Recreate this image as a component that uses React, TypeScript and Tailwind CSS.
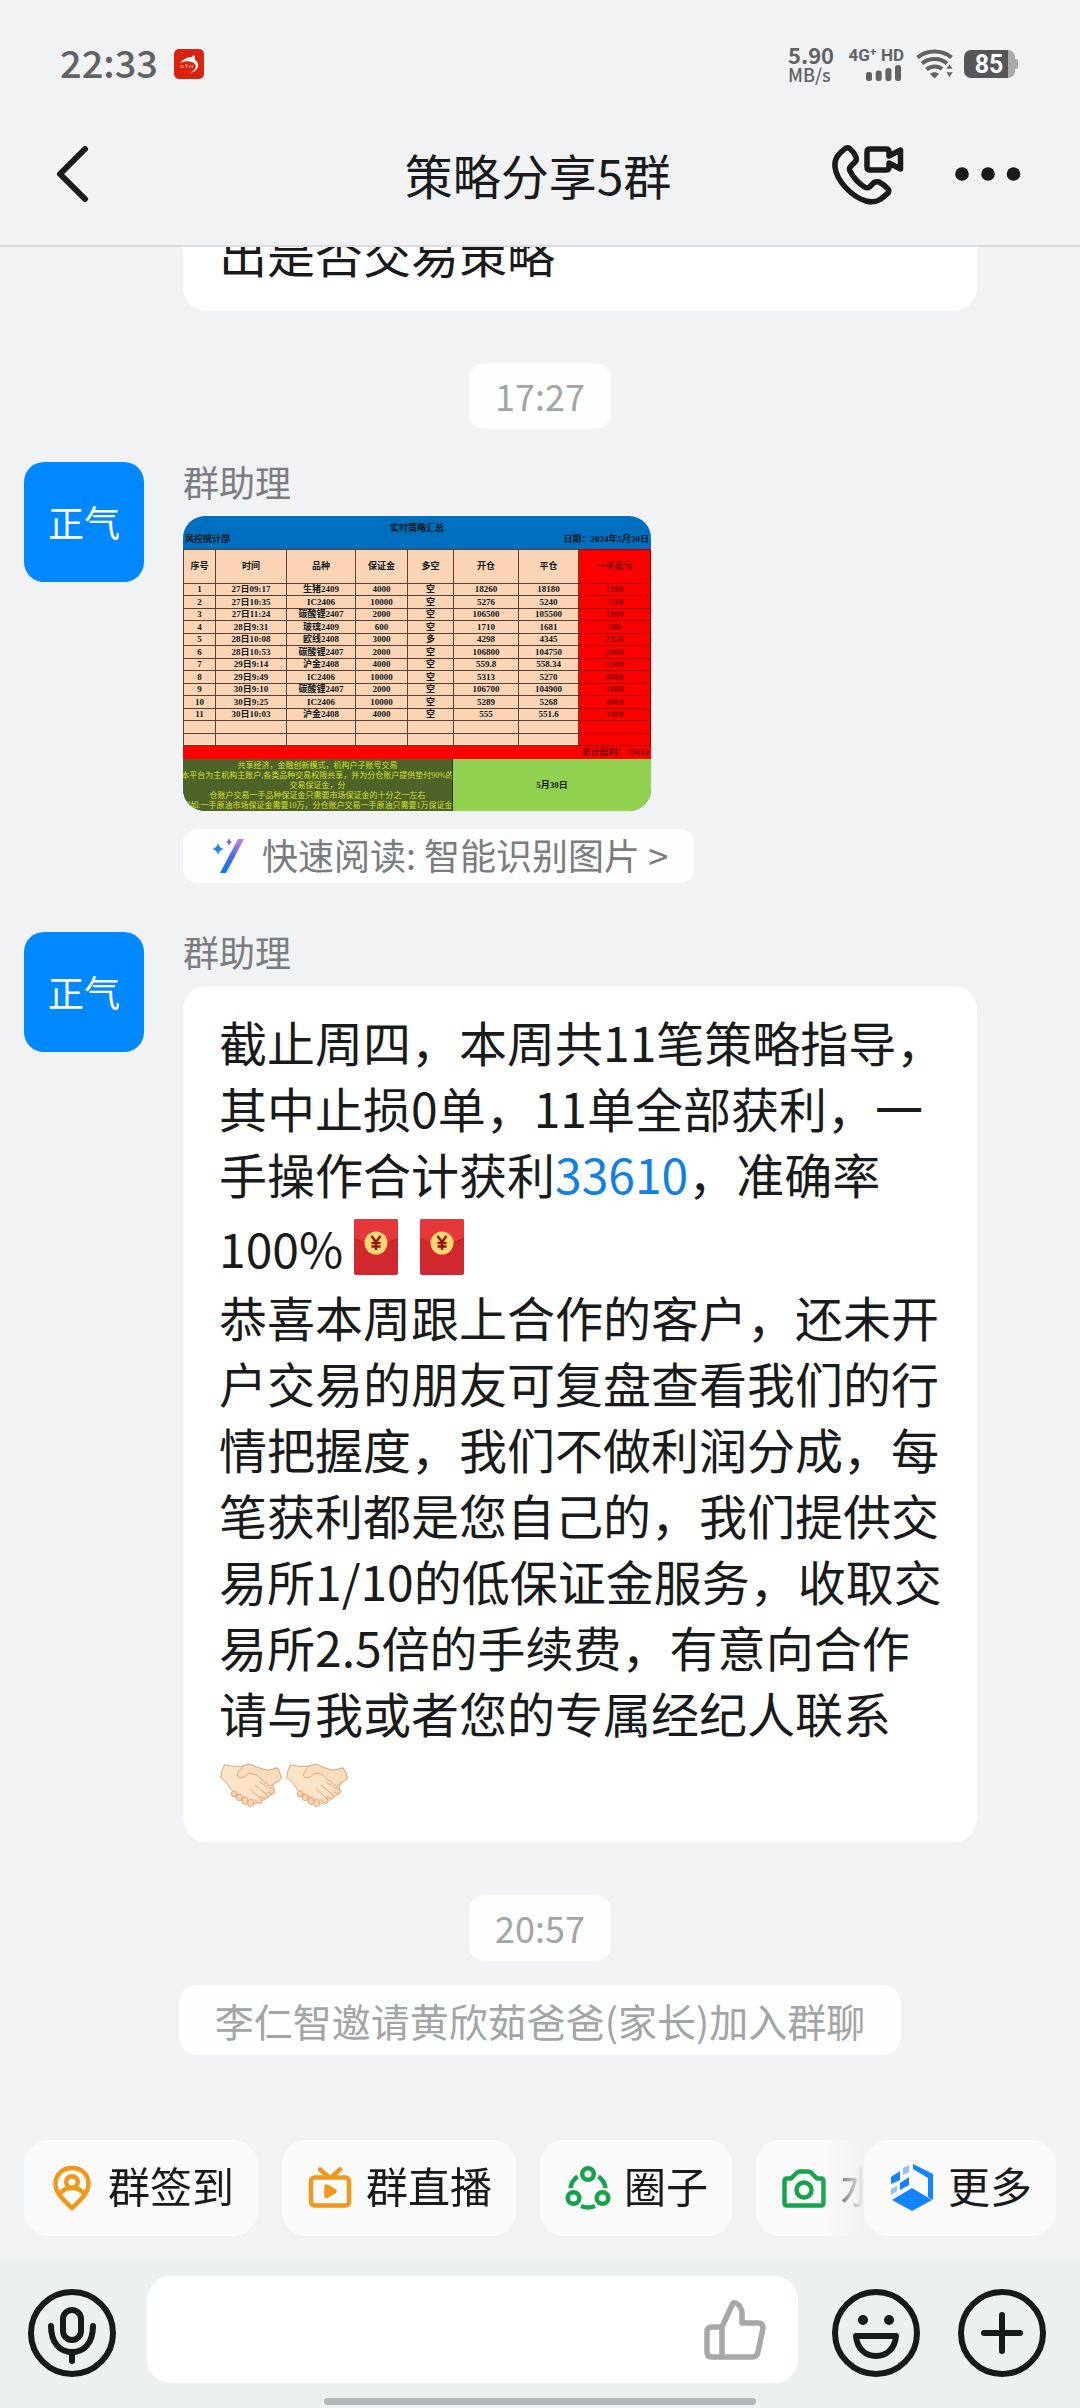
import { ReactNode } from "react";

const strategyRows = [
  ["1", "27日09:17", "生猪2409", "4000", "空", "18260", "18180", "1280"],
  ["2", "27日10:35", "IC2406", "10000", "空", "5276", "5240", "7200"],
  ["3", "27日11:24", "碳酸锂2407", "2000", "空", "106500", "105500", "1000"],
  ["4", "28日9:31", "玻璃2409", "600", "空", "1710", "1681", "580"],
  ["5", "28日10:08", "欧线2408", "3000", "多", "4298", "4345", "2350"],
  ["6", "28日10:53", "碳酸锂2407", "2000", "空", "106800", "104750", "2000"],
  ["7", "29日9:14", "沪金2408", "4000", "空", "559.8", "558.34", "1500"],
  ["8", "29日9:49", "IC2406", "10000", "空", "5313", "5270", "8600"],
  ["9", "30日9:10", "碳酸锂2407", "2000", "空", "106700", "104900", "1800"],
  ["10", "30日9:25", "IC2406", "10000", "空", "5289", "5268", "4000"],
  ["11", "30日10:03", "沪金2408", "4000", "空", "555", "551.6", "3400"],
  ["", "", "", "", "", "", "", ""],
  ["", "", "", "", "", "", "", ""],
];

const strategyColumns = [
  { label: "序号", width: "w-[32px]" },
  { label: "时间", width: "w-[71px]" },
  { label: "品种", width: "w-[69px]" },
  { label: "保证金", width: "w-[52px]" },
  { label: "多空", width: "w-[46px]" },
  { label: "开仓", width: "w-[65px]" },
  { label: "平仓", width: "w-[60px]" },
  { label: "一手盈亏", width: "w-[72px]" },
];

const StatusBar = () => (
  <div className="flex h-[100px] items-center justify-between pt-[28px] pl-[60px] pr-[62px] text-[#606264]">
    <div className="flex items-center gap-4">
      <span className="pb-1 text-[38px] leading-none font-medium">22:33</span>
      <svg className="size-[30px]" viewBox="0 0 30 30">
        <rect width="30" height="30" rx="5" fill="#d9230f" />
        <path
          d="M6 14C10 9 15 8 18 8L19 6.5L21 6.5L20.5 10C24 13 26 17 22 21C20 23 18 23.500 16.500 23.500C21 21.500 23 18 21 15C18 11.500 11 11.500 6 14Z"
          fill="#fff"
        />
        <path
          d="M7 16V19M9 16V19M11 16H14M12.500 16V19M16 16V19M18.500 16V19M16 17.500H18.500"
          stroke="#f6b5ac"
          strokeWidth="0.8"
        />
      </svg>
    </div>
    <div className="flex items-center">
      <div className="flex w-[58px] flex-col">
        <span className="text-[22px] leading-[20px] font-bold">5.90</span>
        <span className="text-[18px] leading-[20px] font-medium">MB/s</span>
      </div>
      <div className="flex w-[58px] flex-col items-end gap-[2px] font-[Roboto]">
        <span className="text-[17px] leading-[16px] font-bold whitespace-nowrap">
          4G⁺ HD
        </span>
        <svg className="mr-[3px] h-[16px] w-[35px]" viewBox="0 0 35 16">
          <g fill="currentColor">
            <rect x="0" y="7" width="6" height="9" rx="2.500" />
            <rect x="9.700" y="5.500" width="6" height="10.500" rx="2.500" />
            <rect x="19.400" y="3" width="6" height="13" rx="2.500" />
            <rect x="29" y="0" width="6" height="16" rx="2.500" />
          </g>
        </svg>
      </div>
      <svg className="ml-3 h-[30px] w-[38px]" viewBox="0 0 38 30">
        <g fill="none" stroke="currentColor" strokeWidth="4">
          <path d="M1.500 8.500C11 0.500 26 0.500 35.500 8.500" />
          <path d="M6 14.500C13 8.500 24 8.500 31 14.500" />
          <path d="M10.500 20.500C15 16.500 22 16.500 26 20" />
        </g>
        <path
          d="M14 25C16.500 22.500 20.500 22.500 23 25L18.500 29.500Z"
          fill="currentColor"
        />
        <path
          d="M33.500 15L37 20H30ZM30 23H37L33.500 28.500Z"
          fill="currentColor"
          stroke="#f1f3f5"
          strokeWidth="0.500"
        />
      </svg>
      <div className="ml-[10px] flex items-center">
        <div className="flex h-[28px] w-[44px] items-center justify-center rounded-l-[7px] bg-[#545658] pl-[6px] font-[Roboto] text-[25px] leading-none font-bold text-white">
          85
        </div>
        <div className="h-[28px] w-[7px] rounded-r-[7px] bg-[#a6a8aa]" />
        <div className="h-[10px] w-[3px] rounded-r-[2px] bg-[#a6a8aa]" />
      </div>
    </div>
  </div>
);

const ChatHeader = () => (
  <header className="grid h-[147px] grid-cols-[1fr_auto_1fr] items-center border-b-2 border-[#d9dbdd] pt-[2px] pr-[58px] pl-[54px] text-[#181a1b]">
    <button type="button" aria-label="返回" className="justify-self-start">
      <svg
        className="h-[60px] w-[36px]"
        viewBox="0 0 36 60"
        fill="none"
        stroke="currentColor"
        strokeWidth="6"
        strokeLinecap="round"
        strokeLinejoin="round"
      >
        <path d="M31 5L6 30L31 55" />
      </svg>
    </button>
    <h1 className="text-[48px] leading-[56px]">策略分享5群</h1>
    <div className="flex items-center gap-[48px] justify-self-end">
      <button type="button" aria-label="通话">
        <svg
          className="h-[66px] w-[76px]"
          viewBox="0 0 76 66"
          fill="none"
          stroke="currentColor"
          strokeWidth="5.500"
          strokeLinejoin="round"
        >
          <path d="M14 8.500C8 13.500 4 18 5 26C6.500 40 22 56 36 60C42 61.500 46 61 50 58.500C53 56.500 56 54 58 52Q59.500 50 58 48C55 44.500 52 42.500 49 41Q46.500 40.300 44 41.500L39.500 46Q37 47.500 34.500 46C28 42 23 36 20 30Q18.800 27.500 20.500 25.500L25 21Q27 19 26 16C24.500 12.500 22 9.500 19.500 7.300Q17 5.800 14 8.500Z" />
          <path d="M40 8H56Q59 8 59 11V15L70.500 9V28L59 22V26Q59 29 56 29H40Q37 29 37 26V11Q37 8 40 8Z" />
        </svg>
      </button>
      <button type="button" aria-label="更多设置">
        <svg className="h-[14px] w-[68px]" viewBox="0 0 68 14" fill="currentColor">
          <circle cx="8" cy="7" r="6.800" />
          <circle cx="34" cy="7" r="6.800" />
          <circle cx="59.500" cy="7" r="6.800" />
        </svg>
      </button>
    </div>
  </header>
);

const TimePill = ({ children }: { children: ReactNode }) => (
  <div className="flex justify-center">
    <time className="rounded-2xl bg-[#fdfefe] px-[26px] pb-[2px] text-[36px] leading-[64px] text-[#a2a4a6]">
      {children}
    </time>
  </div>
);

const Message = ({ children }: { children: ReactNode }) => (
  <article className="flex items-start gap-[39px] pl-[24px]">
    <div className="flex size-[120px] shrink-0 items-center justify-center rounded-[20px] bg-[#0089ff] pb-[2px] text-[36px] leading-none text-white">
      正气
    </div>
    <div className="flex min-w-0 flex-1 flex-col items-start">
      <h2 className="mb-[16px] text-[36px] leading-[38px] text-[#7a7c7f]">
        群助理
      </h2>
      {children}
    </div>
  </article>
);

const StrategySheet = () => (
  <div className="w-[468px] overflow-hidden rounded-[22px] bg-[#006fc0] font-['Liberation_Serif','Noto_Sans_CJK_SC',serif] text-[9px] leading-[11px] font-bold text-[#101820]">
    <div className="flex h-[33px] flex-col pt-[7px]">
      <div className="text-center">实时策略汇总</div>
      <div className="flex justify-between px-[2px]">
        <span>风控统计部</span>
        <span>日期：2024年5月30日</span>
      </div>
    </div>
    <table className="w-full table-fixed border-collapse text-center">
      <thead>
        <tr className="h-[34px]">
          {strategyColumns.map(({ label, width }) => (
            <th
              key={label}
              className={`${width} border border-[#5a4030] bg-[#fbd5b5] p-0 last:border-[#a00000] last:bg-[#ff0000] last:text-[#800000]`}
            >
              {label}
            </th>
          ))}
        </tr>
      </thead>
      <tbody>
        {strategyRows.map((row, rowIndex) => (
          <tr key={rowIndex} className="h-[12px] even:h-[13px]">
            {row.map((cell, cellIndex) => (
              <td
                key={cellIndex}
                className="border border-[#5a4030] bg-[#fbd5b5] p-0 last:border-[#a00000] last:bg-[#ff0000] last:text-[#800000]"
              >
                {cell}
              </td>
            ))}
          </tr>
        ))}
      </tbody>
    </table>
    <div className="h-[13px] bg-[#ff0000] pr-[2px] text-right leading-[13px] text-[#700000]">
      总计盈利：33610
    </div>
    <div className="flex h-[52px]">
      <div className="flex w-[270px] flex-col items-center overflow-hidden border-r border-[#303818] bg-[#4f6228] pt-[2px] text-[8px] leading-[10px] font-normal whitespace-nowrap text-[#d2e02c]">
        <span>共享经济，金融创新模式，机构户子账号交易</span>
        <span>本平台为主机构主账户,各类品种交易权限共享，并为分仓账户提供垫付90%的</span>
        <span>交易保证金，分</span>
        <span>仓账户交易一手品种保证金只需要市场保证金的十分之一左右</span>
        <span>例如:一手原油市场保证金需要10万，分仓账户交易一手原油只需要1万保证金</span>
      </div>
      <div className="flex flex-1 items-center justify-center bg-[#92d050]">
        5月30日
      </div>
    </div>
  </div>
);

const RedPacket = () => (
  <svg className="h-[58px] w-[66px]" viewBox="0 0 66 58" role="img" aria-label="红包">
    <rect x="11" y="1" width="44" height="56" rx="2" fill="#d0282c" />
    <path d="M11 3Q11 1 13 1H53Q55 1 55 3V20Q33 34 11 20Z" fill="#e5383b" />
    <path d="M11 20Q33 34 55 20" fill="none" stroke="#b51f25" strokeWidth="1" />
    <circle cx="33" cy="25" r="11.500" fill="#fbd774" />
    <path
      d="M28.500 18L33 24L37.500 18M33 24V32M28.500 25H37.500M28.500 28.500H37.500"
      fill="none"
      stroke="#8b1a12"
      strokeWidth="2.400"
    />
  </svg>
);

const Handshake = () => (
  <svg className="h-[46px] w-[66px]" viewBox="60 38 198 138" role="img" aria-label="握手">
    <g stroke="#dba87c" strokeWidth="3" strokeLinejoin="round" strokeLinecap="round">
      <path
        d="M76 44Q66 62 65 82L82 96Q92 112 102 124L104 136L154 166L188 152L224 128Q228 118 222 108L226 98Q240 92 247 84Q244 66 234 52Q214 62 196 60Q172 48 146 42L130 48Q100 50 76 44Z"
        fill="#fde3c8"
      />
      <path
        d="M128 52Q138 40 156 43Q180 54 206 60L234 53Q244 66 247 84Q240 93 226 98L214 108L172 74Q158 66 148 70Q136 84 124 82Q112 80 116 70Z"
        fill="#fbdcbd"
      />
      <path d="M182 94L218 120M168 104L204 134M154 116L188 148" fill="none" />
      <g fill="#fbd3b2">
        <ellipse cx="105" cy="131" rx="8" ry="9" />
        <ellipse cx="121" cy="141" rx="9" ry="10" />
        <ellipse cx="138" cy="151" rx="9" ry="11" />
        <ellipse cx="155" cy="158" rx="9" ry="11" />
      </g>
      <path
        d="M214 112Q232 118 226 128Q218 134 206 126M200 128Q212 142 200 146Q192 144 184 138M184 142Q194 156 182 160Q174 158 166 148"
        fill="#fbd3b2"
      />
    </g>
  </svg>
);

const ActionChip = ({ icon, label }: { icon: ReactNode; label: string }) => (
  <button
    type="button"
    className="flex h-[96px] shrink-0 items-center gap-3 rounded-[24px] bg-[#fafafa] px-6 text-[42px] leading-none whitespace-nowrap text-[#181a1b]"
  >
    {icon}
    <span className="pb-[6px]">{label}</span>
  </button>
);

const CheckInIcon = () => (
  <svg className="size-[48px]" viewBox="0 0 48 48" fill="none" stroke="#f0981b" strokeWidth="4.500" strokeLinejoin="round">
    <path d="M24 4C14 4 7.500 11 7.500 20C7.500 30 17 37 24 44C31 37 40.500 30 40.500 20C40.500 11 34 4 24 4Z" />
    <circle cx="24" cy="18" r="5.800" />
    <path d="M11 31C15 24.500 20 24 24 24S33 24.500 37 31" />
  </svg>
);

const LiveIcon = () => (
  <svg className="size-[48px]" viewBox="0 0 48 48" fill="none" stroke="#f0981b" strokeWidth="4.500" strokeLinejoin="round" strokeLinecap="round">
    <rect x="5" y="13.500" width="38" height="28" rx="3.500" />
    <path d="M14 5.500L22 12.500M34 5.500L26 12.500M20.500 22.500V32L28.500 27.200Z" />
  </svg>
);

const CircleIcon = () => (
  <svg className="size-[48px]" viewBox="0 0 48 48" fill="none" stroke="#16a34e" strokeWidth="4.500">
    <circle cx="24" cy="10" r="5.800" />
    <circle cx="9.500" cy="34" r="5.800" />
    <circle cx="38.500" cy="34" r="5.800" />
    <path d="M13.500 12.500Q7.500 17 6.500 24M34.500 12.500Q40.500 17 41.500 24M17 42Q24 45 31 42" />
  </svg>
);

const CameraIcon = () => (
  <svg className="size-[48px]" viewBox="0 0 48 48" fill="none" stroke="#16a34e" strokeWidth="4.500" strokeLinejoin="round">
    <path d="M7 14.500H11L17 8.500Q18 7.500 19.500 7.500H28.500Q30 7.500 31 8.500L37 14.500H41Q43.500 14.500 43.500 17V39Q43.500 41.500 41 41.500H7Q4.500 41.500 4.500 39V17Q4.500 14.500 7 14.500Z" />
    <circle cx="24" cy="26" r="7.500" />
  </svg>
);

const MoreIcon = () => (
  <svg className="size-[48px]" viewBox="0 0 48 48">
    <g fill="#1283ff">
      <path d="M24 24L44 36L24 47L4 36Z" />
      <path d="M3 13L12 7V16L3 20ZM12 19L21 13V21L12 26Z" />
      <path d="M25 0L45 10V36L40 33V14L25 5Z" />
    </g>
    <path d="M15 4L21 1V8L15 11ZM3 25L9 22V27L3 31Z" fill="#8fc0f7" />
  </svg>
);

const QuickActions = () => (
  <nav className="flex pt-[20px] pr-[24px] pb-[22px] pl-[24px]">
    <div className="flex min-w-0 flex-1 gap-6 overflow-hidden [mask-image:linear-gradient(to_right,black_95%,transparent)]">
      <ActionChip icon={<CheckInIcon />} label="群签到" />
      <ActionChip icon={<LiveIcon />} label="群直播" />
      <ActionChip icon={<CircleIcon />} label="圈子" />
      <ActionChip icon={<CameraIcon />} label="水印相机" />
    </div>
    <ActionChip icon={<MoreIcon />} label="更多" />
  </nav>
);

const Composer = () => (
  <footer className="bg-[#ecf0f1] pt-[18px] pb-[3px] text-[#161a1b]">
    <form className="flex items-center pr-[34px] pl-[28px]">
      <button type="button" aria-label="语音" className="pt-[6px]">
        <svg className="size-[88px]" viewBox="0 0 88 88" fill="none" stroke="currentColor" strokeWidth="6" strokeLinecap="round">
          <circle cx="44" cy="44" r="41" />
          <rect x="35" y="21" width="18" height="30" rx="9" />
          <path d="M23 37C23 54 32 63 44 63S65 54 65 37M44 63V72" />
        </svg>
      </button>
      <div className="mr-[34px] ml-[31px] flex h-[107px] min-w-0 flex-1 items-center rounded-[24px] bg-white pr-[32px] pl-[32px]">
        <input
          type="text"
          aria-label="消息"
          className="h-full min-w-0 flex-1 bg-transparent text-[42px] outline-none"
        />
        <button type="button" aria-label="点赞" className="text-[#a8a8a8]">
          <svg className="size-[62px]" viewBox="0 0 62 62" fill="none" stroke="currentColor" strokeWidth="5.500" strokeLinejoin="round">
            <path d="M18 58H8Q3 58 3 53V33Q3 28 8 28H18ZM18 28L28 6Q29 3 32 4Q37 7 38 13V24H54Q59 24 59 29L54 53Q53 58 48 58H18Z" />
          </svg>
        </button>
      </div>
      <button type="button" aria-label="表情" className="mr-[38px] pt-[6px]">
        <svg className="size-[88px]" viewBox="0 0 88 88" fill="none" stroke="currentColor" strokeWidth="6" strokeLinejoin="round">
          <circle cx="44" cy="44" r="41" />
          <path d="M24 47H64C63 60 54 67 44 67S25 60 24 47Z" />
          <circle cx="31" cy="31" r="5" fill="currentColor" stroke="none" />
          <circle cx="57" cy="31" r="5" fill="currentColor" stroke="none" />
        </svg>
      </button>
      <button type="button" aria-label="更多功能" className="pt-[6px]">
        <svg className="size-[88px]" viewBox="0 0 88 88" fill="none" stroke="currentColor" strokeWidth="6" strokeLinecap="round">
          <circle cx="44" cy="44" r="41" />
          <path d="M44 26V62M26 44H62" />
        </svg>
      </button>
    </form>
    <div className="mx-auto mt-[15px] h-[7px] w-2/5 rounded-full bg-[#b3b7b9]" />
  </footer>
);

export default function App() {
  return (
    <div className="flex min-h-screen flex-col bg-[#f0f2f4] font-['Noto_Sans_CJK_SC',sans-serif] text-[#181a1b]">
      <StatusBar />
      <ChatHeader />
      <main className="flex flex-1 flex-col">
        {/* tail of the previous message, cut off by the header */}
        <div className="mr-[103px] ml-[183px] flex h-[64px] flex-col justify-end overflow-hidden">
          <div className="rounded-b-[24px] bg-white px-[36px] pb-[26px] text-[48px] leading-[66px]">
            出是否交易策略
          </div>
        </div>
        <div className="mt-[52px]">
          <TimePill>17:27</TimePill>
        </div>

        <div className="mt-[33px]">
          <Message>
            <StrategySheet />
            <button
              type="button"
              className="mt-[18px] flex h-[54px] items-center gap-[17px] rounded-[14px] bg-[#fdfefe] pr-[26px] pl-[28px] text-[36px] leading-none text-[#7a7c7f]"
            >
              <svg className="h-[38px] w-[34px]" viewBox="0 0 34 38">
                <defs>
                  <linearGradient id="wand" x1="0" y1="1" x2="0" y2="0">
                    <stop offset="0" stopColor="#0b7be8" />
                    <stop offset="0.5" stopColor="#4b6be0" />
                    <stop offset="1" stopColor="#d07be6" />
                  </linearGradient>
                </defs>
                <path d="M27 2H33L15 36H9Z" fill="url(#wand)" />
                <path d="M7 6Q8 11 13 12Q8 13 7 18Q6 13 1 12Q6 11 7 6Z" fill="#2c83e6" />
                <path d="M18 1Q18.500 4 21 5Q18.500 6 18 9Q17.500 6 15 5Q17.500 4 18 1Z" fill="#7a66d8" />
              </svg>
              <span className="pb-1">快速阅读: 智能识别图片 &gt;</span>
            </button>
          </Message>
        </div>

        <div className="mt-[49px] mr-[103px]">
          <Message>
            <div className="w-full rounded-[24px] bg-white px-[36px] pt-[22px] pb-[20px] text-[48px] leading-[66px] whitespace-nowrap">
              <p>截止周四，本周共11笔策略指导，</p>
              <p>其中止损0单，11单全部获利，一</p>
              <p>
                手操作合计获利
                <a href="#33610" className="text-[#1280e0]">
                  33610
                </a>
                ，准确率
              </p>
              <p className="flex h-[77px] items-center pt-1">
                100%
                <RedPacket />
                <RedPacket />
              </p>
              <p>恭喜本周跟上合作的客户，还未开</p>
              <p>户交易的朋友可复盘查看我们的行</p>
              <p>情把握度，我们不做利润分成，每</p>
              <p>笔获利都是您自己的，我们提供交</p>
              <p>易所1/10的低保证金服务，收取交</p>
              <p>易所2.5倍的手续费，有意向合作</p>
              <p>请与我或者您的专属经纪人联系</p>
              <p className="flex h-[77px] items-center pt-1">
                <Handshake />
                <Handshake />
              </p>
            </div>
          </Message>
        </div>

        <div className="mt-[53px]">
          <TimePill>20:57</TimePill>
        </div>
        <div className="mt-[24px] flex justify-center">
          <p className="rounded-[18px] bg-[#fdfefe] px-[36px] text-[39px] leading-[70px] text-[#a2a4a6]">
            李仁智邀请黄欣茹爸爸(家长)加入群聊
          </p>
        </div>
      </main>
      <QuickActions />
      <Composer />
    </div>
  );
}
